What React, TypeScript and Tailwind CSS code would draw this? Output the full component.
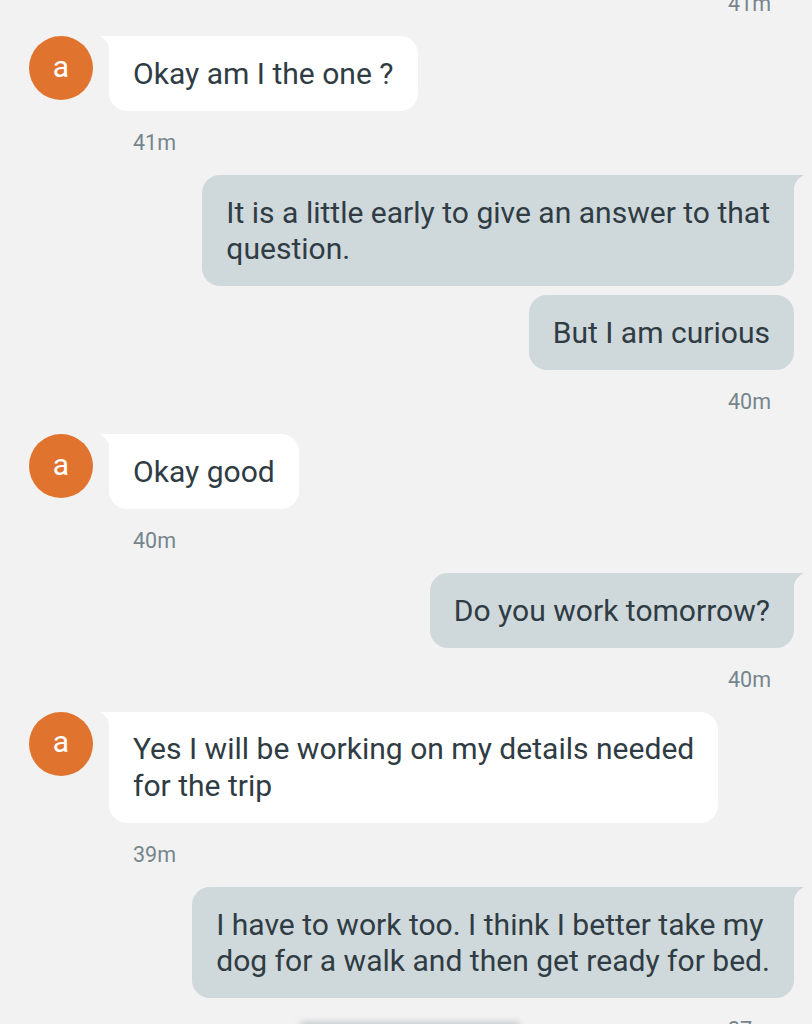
import React from 'react';

const FONT = { fontFamily: 'Roboto, sans-serif' };

const Avatar = () => (
  <div className="flex h-[64px] w-[64px] shrink-0 items-center justify-center rounded-full bg-[#e0742f] pb-[3px] text-[30px] leading-none text-white">
    a
  </div>
);

const Tail = ({ side }: { side: 'left' | 'right' }) =>
  side === 'left' ? (
    <svg className="absolute left-[-9px] top-0" width="10" height="18" viewBox="0 0 10 18">
      <path d="M0 0H10V18C10 10 7 4 0 0Z" fill="#ffffff" />
    </svg>
  ) : (
    <svg className="absolute right-[-10px] top-0" width="11" height="14" viewBox="0 0 11 14">
      <path d="M11 0H0V14H1C1 8 5 3 11 0Z" fill="#cfd8db" />
    </svg>
  );

const Stamp = ({ side, children }: { side: 'left' | 'right'; children: string }) => (
  <div
    className={`flex h-[63.75px] items-center text-[21.5px] text-[#76858d] ${
      side === 'left' ? 'pl-[133px] justify-start' : 'pr-[41px] justify-end'
    }`}
  >
    {children}
  </div>
);

const Incoming = ({ lines }: { lines: string[] }) => (
  <div className="flex items-start pl-[29px]">
    <Avatar />
    <div className="relative ml-[16px] rounded-[18px] rounded-tl-none bg-white px-[24px] pt-[19.75px] pb-[18.75px] text-[30.06px] leading-[36.5px] text-[#2f3c44]">
      <Tail side="left" />
      {lines.map(l => (
        <div key={l} className="whitespace-nowrap">{l}</div>
      ))}
    </div>
  </div>
);

const Outgoing = ({ lines, tail = true, className = '' }: { lines: string[]; tail?: boolean; className?: string }) => (
  <div className={`flex justify-end pr-[18px] ${className}`}>
    <div
      className={`relative rounded-[18px] bg-[#cfd8db] px-[24px] pt-[19.75px] pb-[18.75px] text-[30.06px] leading-[36.5px] text-[#2f3c44] ${
        tail ? 'rounded-tr-none' : ''
      }`}
    >
      {tail && <Tail side="right" />}
      {lines.map(l => (
        <div key={l} className="whitespace-nowrap">{l}</div>
      ))}
    </div>
  </div>
);

export default function App() {
  return (
    <div className="relative h-[1024px] w-[812px] overflow-hidden bg-[#f2f2f2]" style={FONT}>
      <div className="-mt-[27.75px]">
        <Stamp side="right">41m</Stamp>
        <Incoming lines={['Okay am I the one ?']} />
        <Stamp side="left">41m</Stamp>
        <Outgoing lines={['It is a little early to give an answer to that', 'question.']} />
        <Outgoing lines={['But I am curious']} tail={false} className="mt-[9px]" />
        <Stamp side="right">40m</Stamp>
        <Incoming lines={['Okay good']} />
        <Stamp side="left">40m</Stamp>
        <Outgoing lines={['Do you work tomorrow?']} />
        <Stamp side="right">40m</Stamp>
        <Incoming lines={['Yes I will be working on my details needed', 'for the trip']} />
        <Stamp side="left">39m</Stamp>
        <Outgoing lines={['I have to work too. I think I better take my', 'dog for a walk and then get ready for bed.']} />
        <Stamp side="right">37m</Stamp>
      </div>
      <div className="absolute bottom-[-6px] left-[300px] h-[8px] w-[220px] rounded-full bg-[#c4c8ca] blur-[3px]" />
    </div>
  );
}
